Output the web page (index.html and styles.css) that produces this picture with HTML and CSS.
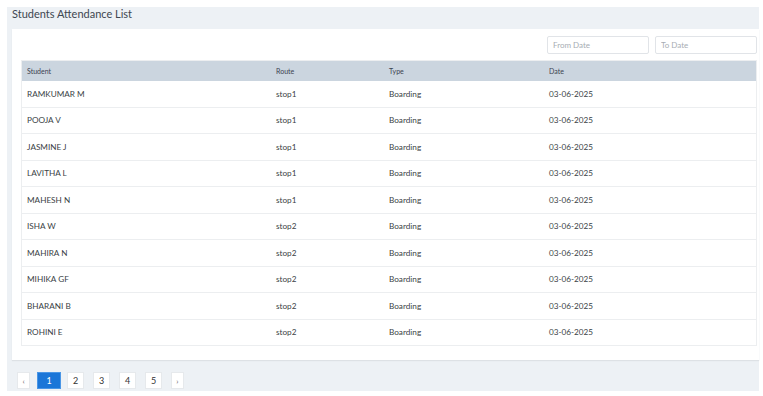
FILE: index.html
```html
<!DOCTYPE html>
<html lang="en">
<head>
  <meta charset="UTF-8">
  <meta name="viewport" content="width=device-width, initial-scale=1.0">
  <title>Students Attendance List</title>
  <link rel="stylesheet" href="styles.css">
</head>
<body>
  <div class="page">
    <h2 class="title">Students Attendance List</h2>
    <div class="card">
      <div class="filters">
        <input type="text" class="date-input" placeholder="From Date">
        <input type="text" class="date-input" placeholder="To Date">
      </div>
      <table class="list">
        <thead>
          <tr>
            <th class="c-student">Student</th>
            <th class="c-route">Route</th>
            <th class="c-type">Type</th>
            <th>Date</th>
          </tr>
        </thead>
        <tbody>
          <tr><td>RAMKUMAR M</td><td>stop1</td><td>Boarding</td><td>03-06-2025</td></tr>
          <tr><td>POOJA V</td><td>stop1</td><td>Boarding</td><td>03-06-2025</td></tr>
          <tr><td>JASMINE J</td><td>stop1</td><td>Boarding</td><td>03-06-2025</td></tr>
          <tr><td>LAVITHA L</td><td>stop1</td><td>Boarding</td><td>03-06-2025</td></tr>
          <tr><td>MAHESH N</td><td>stop1</td><td>Boarding</td><td>03-06-2025</td></tr>
          <tr><td>ISHA W</td><td>stop2</td><td>Boarding</td><td>03-06-2025</td></tr>
          <tr><td>MAHIRA N</td><td>stop2</td><td>Boarding</td><td>03-06-2025</td></tr>
          <tr><td>MIHIKA GF</td><td>stop2</td><td>Boarding</td><td>03-06-2025</td></tr>
          <tr><td>BHARANI B</td><td>stop2</td><td>Boarding</td><td>03-06-2025</td></tr>
          <tr><td>ROHINI E</td><td>stop2</td><td>Boarding</td><td>03-06-2025</td></tr>
        </tbody>
      </table>
    </div>
    <div class="pager">
      <button class="pg arrow">&lsaquo;</button>
      <button class="pg active">1</button>
      <button class="pg">2</button>
      <button class="pg">3</button>
      <button class="pg">4</button>
      <button class="pg">5</button>
      <button class="pg arrow">&rsaquo;</button>
    </div>
  </div>
</body>
</html>
```

FILE: styles.css
```css
body {
  margin: 0;
  padding: 7px 4px 6px 7px;
  background: #fff;
  font-family: Lato, "Open Sans", sans-serif;
  color: #333;
}
.page {
  background-color: #edf1f5;
  padding: 0 0 1px 5px;
}
.title {
  margin: 0;
  height: 22px;
  font-size: 11px;
  font-weight: 400;
  line-height: 14px;
  color: #3d4650;
}
.card {
  background: #fff;
  padding: 7px 2px 14px 9px;
  box-shadow: 0 1px 1px #dde1e5;
}
.filters {
  display: flex;
  justify-content: flex-end;
  gap: 6px;
  margin-bottom: 6px;
}
.date-input {
  width: 102px;
  height: 18px;
  box-sizing: border-box;
  border: 1px solid #e1e4e8;
  border-radius: 2px;
  padding: 0 5px;
  font-family: inherit;
  font-size: 8px;
  color: #333;
}
.date-input::placeholder {
  color: #a7adb3;
}
.list {
  width: 100%;
  border-collapse: collapse;
  border: 1px solid #eceef0;
  font-size: 8.2px;
}
.list th {
  background-color: #cbd5df;
  height: 20px;
  padding: 0 5px;
  text-align: left;
  font-size: 7px;
  font-weight: 400;
  color: #3b4250;
}
.list td {
  height: 25.5px;
  padding: 0 5px;
  border-top: 1px solid #eceef0;
  color: #3a3f45;
}
.list tbody tr:first-child td {
  border-top: none;
}
.c-student { width: 239px; }
.c-route { width: 103px; }
.c-type { width: 150px; }
.pager {
  display: flex;
  gap: 9px;
  padding: 12px 0 1px 5px;
}
.pg {
  min-width: 17px;
  height: 17px;
  padding: 0 4px;
  border: 1px solid #e6e9ec;
  background: #fff;
  font-family: inherit;
  font-size: 9px;
  color: #333;
}
.pg.arrow {
  min-width: 13px;
  font-size: 8px;
  color: #666;
}
.pg.active {
  min-width: 24px;
  margin: 0 -3px 0 -2px;
  background-color: #1b76d8;
  border-color: #4a96e6;
  color: #fff;
}
```
